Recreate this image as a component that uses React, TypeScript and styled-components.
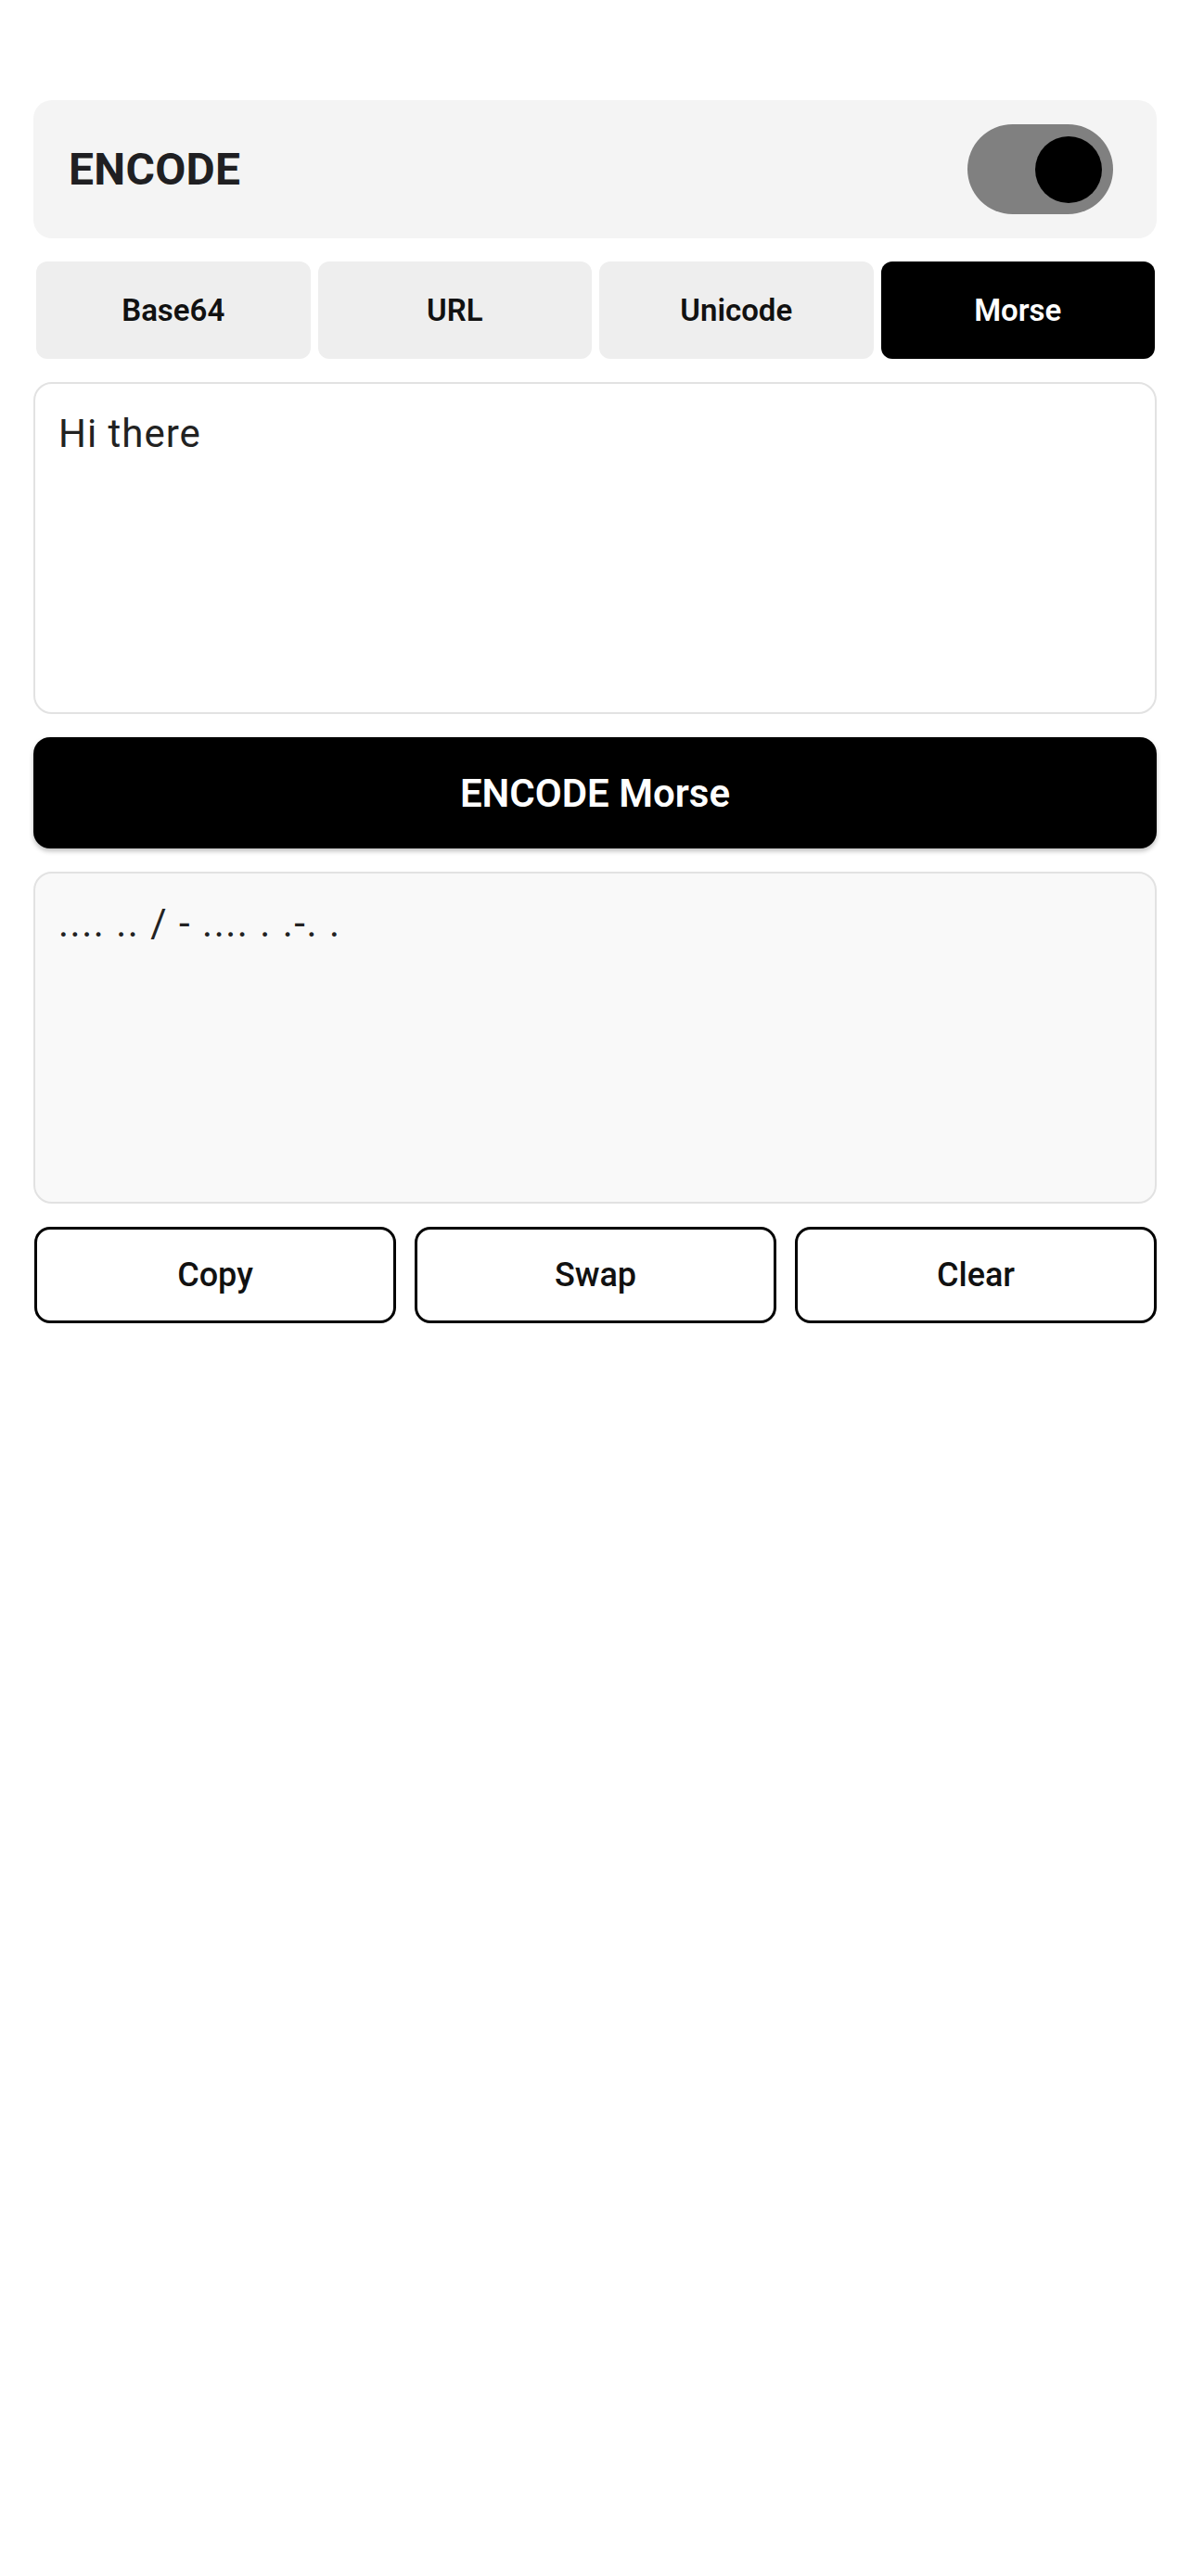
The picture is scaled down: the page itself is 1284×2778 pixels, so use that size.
import React, { useState } from "react";
import styled, { createGlobalStyle } from "styled-components";

const Global = createGlobalStyle`
  html, body { margin: 0; padding: 0; background: #ffffff; }
  body { font-family: Roboto, "Liberation Sans", Arial, sans-serif; }
  * { box-sizing: border-box; }
`;

const Page = styled.div`
  width: 1284px;
  min-height: 2778px;
  background: #ffffff;
  padding: 108px 37px 0 36px;
  display: flex;
  flex-direction: column;
  gap: 25px;
`;

const HeaderCard = styled.div`
  height: 149px;
  background: #f4f4f4;
  border-radius: 20px;
  display: flex;
  align-items: center;
  justify-content: space-between;
  padding: 0 47px 0 38px;
`;

const Title = styled.h1`
  margin: 0;
  font-family: Roboto, "Liberation Sans", sans-serif;
  font-size: 48px;
  font-weight: 700;
  color: #1f1f22;
  letter-spacing: 0.3px;
`;

const Track = styled.button<{ $on: boolean }>`
  width: 157px;
  height: 97px;
  border: none;
  border-radius: 49px;
  background: #808080;
  padding: 0 12px;
  display: flex;
  align-items: center;
  justify-content: ${(p) => (p.$on ? "flex-end" : "flex-start")};
  cursor: pointer;
`;

const Knob = styled.span`
  width: 72px;
  height: 72px;
  border-radius: 50%;
  background: #000000;
  display: block;
`;

const Tabs = styled.div`
  display: flex;
  gap: 8px;
  padding: 0 2px 0 3px;
`;

const Tab = styled.button<{ $active: boolean }>`
  flex: 1;
  height: 105px;
  border: none;
  border-radius: 12px;
  background: ${(p) => (p.$active ? "#000000" : "#eeeeee")};
  color: ${(p) => (p.$active ? "#ffffff" : "#111111")};
  font-family: Roboto, "Liberation Sans", sans-serif;
  font-size: 33px;
  font-weight: 600;
  cursor: pointer;
`;

const Field = styled.textarea<{ $output?: boolean }>`
  display: block;
  width: 100%;
  height: 358px;
  resize: none;
  border: 2px solid #e2e2e2;
  border-radius: 20px;
  background: ${(p) => (p.$output ? "#f9f9f9" : "#ffffff")};
  padding: 29px 25px;
  font-family: Roboto, "Liberation Sans", sans-serif;
  font-size: 42px;
  line-height: 1.172;
  letter-spacing: ${(p) => (p.$output ? "1.5px" : "1px")};
  color: #222222;
  outline: none;
`;

const Primary = styled.button`
  height: 120px;
  border: none;
  border-radius: 18px;
  background: #000000;
  color: #ffffff;
  font-family: Roboto, "Liberation Sans", sans-serif;
  font-size: 42px;
  font-weight: 600;
  box-shadow: 0 3px 5px rgba(0, 0, 0, 0.25);
  cursor: pointer;
`;

const ActionRow = styled.div`
  display: flex;
  gap: 20px;
  padding-left: 1px;
`;

const Action = styled.button`
  flex: 1;
  height: 104px;
  border: 3px solid #000000;
  border-radius: 17px;
  background: #ffffff;
  color: #111111;
  font-family: Roboto, "Liberation Sans", sans-serif;
  font-size: 36px;
  font-weight: 500;
  cursor: pointer;
`;

const tabs = ["Base64", "URL", "Unicode", "Morse"];

export default function App() {
  const [on, setOn] = useState(true);
  const [mode, setMode] = useState("Morse");
  return (
    <>
      <Global />
      <Page>
        <HeaderCard>
          <Title>ENCODE</Title>
          <Track $on={on} onClick={() => setOn(!on)} aria-label="toggle mode">
            <Knob />
          </Track>
        </HeaderCard>
        <Tabs>
          {tabs.map((t) => (
            <Tab key={t} $active={mode === t} onClick={() => setMode(t)}>
              {t}
            </Tab>
          ))}
        </Tabs>
        <Field defaultValue="Hi there" />
        <Primary>ENCODE Morse</Primary>
        <Field $output readOnly defaultValue=".... .. / - .... . .-. ." />
        <ActionRow>
          <Action>Copy</Action>
          <Action>Swap</Action>
          <Action>Clear</Action>
        </ActionRow>
      </Page>
    </>
  );
}
